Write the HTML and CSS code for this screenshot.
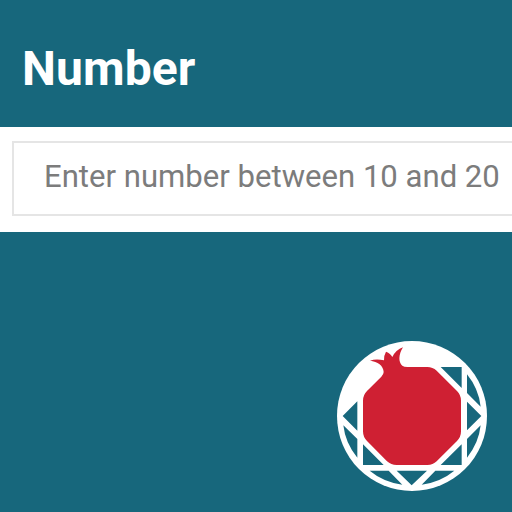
FILE: index.html
```
<!DOCTYPE html>
<html lang="en">
<head>
<meta charset="utf-8">
<title>Number</title>
<link rel="stylesheet" href="styles.css">
</head>
<body>
<main class="card">
  <h1 class="title">Number</h1>
  <section class="panel">
    <div class="field"><span class="hint">Enter number between 10 and 20</span></div>
  </section>
  <footer class="brand">
    <svg class="logo" viewBox="21 18 450 450" aria-hidden="true">
      <circle class="disc" cx="246" cy="243" r="225"/>
      <path class="facet" d="M38 243L82 199V287ZM454 243L411 200V286ZM332 96H395V159ZM411 118Q446 161 452 215L411 174ZM452 271L411 312V368Q446 325 452 271ZM40 271L82 312V368Q46 325 40 271ZM99 328V390H161ZM395 328V390H332ZM119 407H176L217 449Q160 441 119 407ZM373 407H316L275 449Q332 441 373 407ZM200 407H291L245 451Z"/>
      <path class="fruit" d="M120 77Q138 70 162 76Q161 62 168 50Q182 55 187 66Q198 44 219 37C205 59 205 82 217 92Q222 96 232 96H292Q308 96 320 107L381 168Q393 180 393 197V289Q393 306 381 318L320 379Q309 390 292 390H200Q183 390 171 379L111 318Q99 306 99 289V197Q99 180 111 168L154 125Q161 118 161 111C160 91 143 80 120 77Z"/>
    </svg>
  </footer>
</main>
</body>
</html>
```
FILE: styles.css
```
* {
  box-sizing: border-box;
}

body {
  margin: 0;
  font-family: Roboto, "Liberation Sans", sans-serif;
}

.card {
  display: flex;
  flex-direction: column;
  width: 512px;
  height: 512px;
  overflow: hidden;
  background: #17677c;
}

.title {
  height: 127px;
  margin: 0;
  padding: 41px 0 0 22px;
  font-size: 48px;
  font-weight: 700;
  line-height: 56px;
  letter-spacing: 0.1px;
  color: #fff;
}

.panel {
  height: 105px;
  padding: 14px 0 16px 12px;
  background: #fff;
}

.field {
  height: 75px;
  padding: 16px 0 0 30px;
  border: 2px solid #e5e5e5;
  border-right: 0;
  white-space: nowrap;
}

.hint {
  font-size: 31.1px;
  line-height: 36px;
  color: #7c7c7c;
}

.brand {
  display: flex;
  flex: 1;
  align-items: flex-end;
  justify-content: flex-end;
  padding: 0 25px 21px 0;
}

.logo {
  width: 150px;
  height: 150px;
}

.disc {
  fill: #fff;
}

.facet {
  fill: #17677c;
}

.fruit {
  fill: #cf2033;
}
```
